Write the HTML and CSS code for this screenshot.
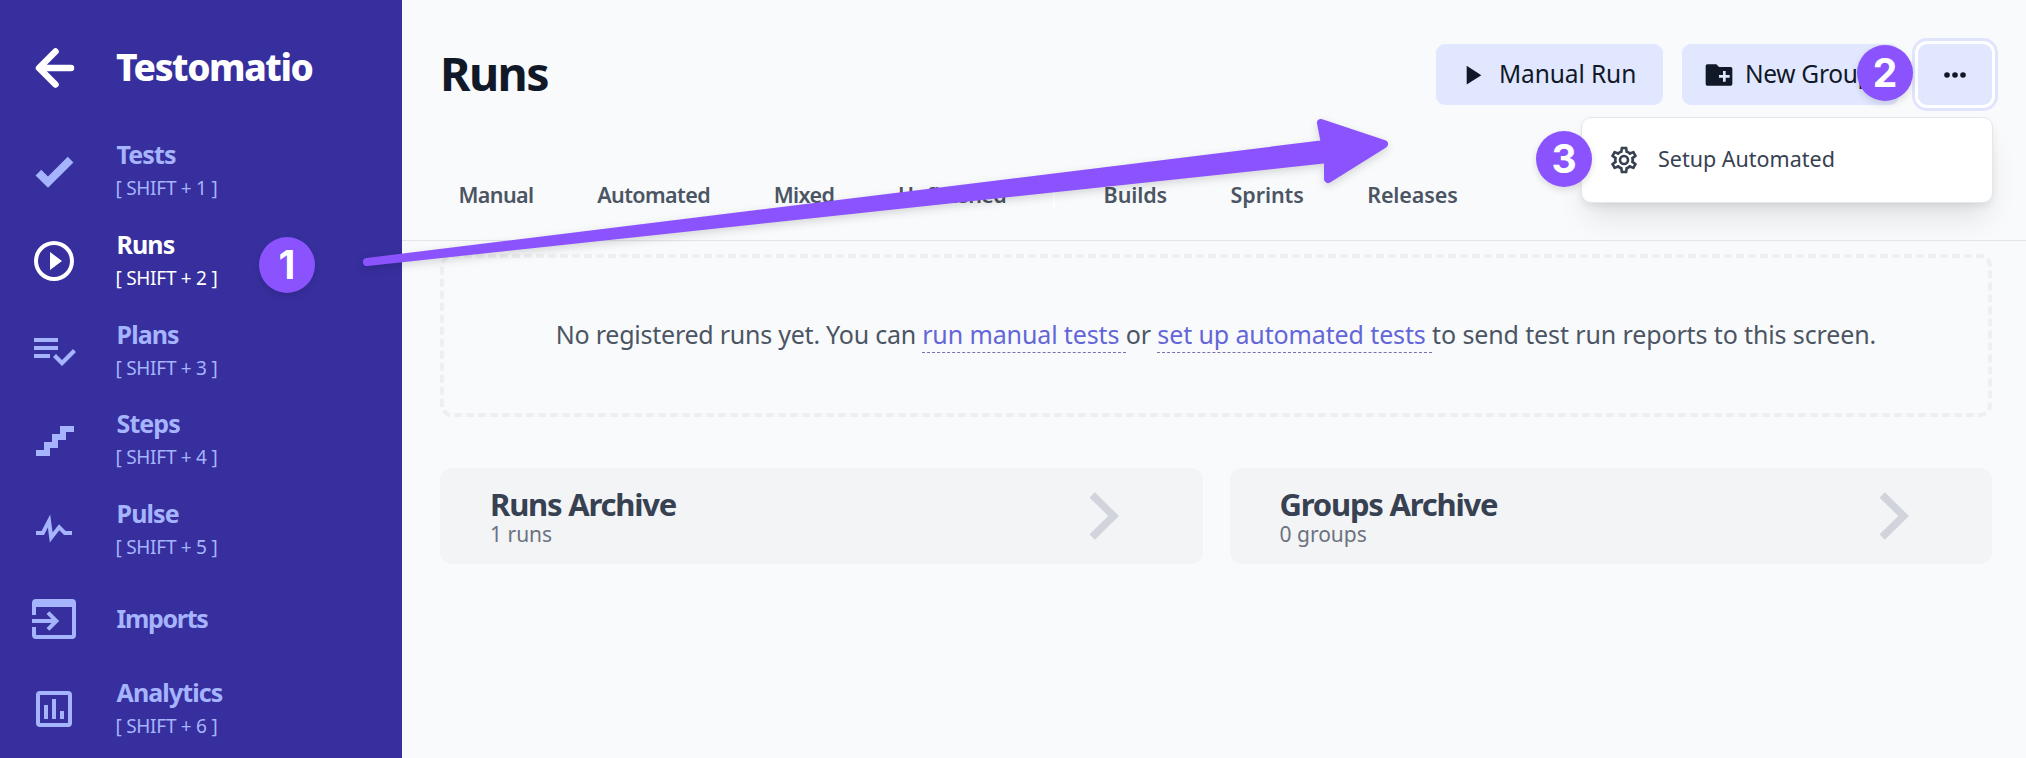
FILE: index.html
```html
<!DOCTYPE html>
<html lang="en">
<head>
<meta charset="utf-8">
<title>Runs - Testomatio</title>
<link rel="stylesheet" href="styles.css">
</head>
<body>
<div class="app">
  <aside class="sidebar">
    <div class="brand">
      <svg class="brand-back" viewBox="0 0 48 48"><path d="M25.5 7.5 9 24l16.5 16.5M9.500 24H41"/></svg>
      <span class="brand-name">Testomatio</span>
    </div>
    <nav class="nav">
      <a class="nav-item">
        <svg class="icon" viewBox="0 0 24 24"><path d="M9 20.420 2.790 14.210l2.830-2.830L9 14.770l9.880-9.890 2.830 2.830z"/></svg>
        <span class="nav-text"><b>Tests</b><small>[ SHIFT + 1 ]</small></span>
      </a>
      <a class="nav-item active">
        <svg class="icon" viewBox="0 0 24 24"><path d="M12 20a8 8 0 1 1 0-16 8 8 0 0 1 0 16m0-18a10 10 0 1 0 0 20 10 10 0 0 0 0-20m-2 14.500 6-4.500-6-4.500z"/></svg>
        <span class="nav-text"><b>Runs</b><small>[ SHIFT + 2 ]</small></span>
      </a>
      <a class="nav-item">
        <svg class="icon" viewBox="0 0 24 24"><path d="M14 10H2v2h12zM14 6H2v2h12zM2 16h8v-2H2zM21.500 11.500 23 13l-7 7-4.500-4.500L13 14l3 3z"/></svg>
        <span class="nav-text"><b>Plans</b><small>[ SHIFT + 3 ]</small></span>
      </a>
      <a class="nav-item">
        <svg class="icon" viewBox="0 0 24 24"><path d="M15 5v4h-4v4H7v4H3v3h7v-4h4v-4h4V8h4V5z"/></svg>
        <span class="nav-text"><b>Steps</b><small>[ SHIFT + 4 ]</small></span>
      </a>
      <a class="nav-item">
        <svg class="icon" viewBox="0 0 24 24"><path d="M3 13h2.790l4.310-8.210 1.180 8.960 3.220-4.090L17.830 13H21v2h-4l-2.330-2.330-4.750 6.060-.98-7.420L7 15H3z"/></svg>
        <span class="nav-text"><b>Pulse</b><small>[ SHIFT + 5 ]</small></span>
      </a>
      <a class="nav-item single">
        <svg class="icon" viewBox="0 0 24 24"><path d="M1 12h9.760l-2.500-2.500 1.410-1.420L14.590 13l-4.920 4.920-1.410-1.420 2.500-2.500H1zM21 2H3a2 2 0 0 0-2 2v6h2V6h18v14H3v-4H1v4a2 2 0 0 0 2 2h18a2 2 0 0 0 2-2V4a2 2 0 0 0-2-2"/></svg>
        <span class="nav-text"><b>Imports</b></span>
      </a>
      <a class="nav-item">
        <svg class="icon" viewBox="0 0 24 24"><path d="M19 3H5a2 2 0 0 0-2 2v14a2 2 0 0 0 2 2h14a2 2 0 0 0 2-2V5a2 2 0 0 0-2-2m0 16H5V5h14zM7 10h2v7H7zM11 7h2v10h-2zM15 13h2v4h-2z"/></svg>
        <span class="nav-text"><b>Analytics</b><small>[ SHIFT + 6 ]</small></span>
      </a>
    </nav>
  </aside>

  <main class="main">
    <header class="topbar">
      <h1>Runs</h1>
      <div class="actions">
        <button class="btn manual">
          <svg class="btn-icon" viewBox="0 0 24 24"><path d="M8 5.140v14l11-7z"/></svg><span>Manual Run</span>
        </button>
        <button class="btn group">
          <svg class="btn-icon" viewBox="0 0 24 24"><path fill-rule="evenodd" d="M20.800 6H12l-2-2H3.200A1.200 1.200 0 0 0 2 5.200v13.600A1.200 1.200 0 0 0 3.200 20h17.600a1.200 1.200 0 0 0 1.200-1.200V7.200A1.200 1.200 0 0 0 20.800 6M20 14h-3v3h-2v-3h-3v-2h3V9h2v3h3z"/></svg><span>New Group</span>
          <i class="badge badge-2">2</i>
        </button>
        <div class="more-wrap">
          <button class="btn more">
            <svg class="btn-icon" viewBox="0 0 32 32"><circle cx="8" cy="16" r="2.800"/><circle cx="16" cy="16" r="2.800"/><circle cx="24" cy="16" r="2.800"/></svg>
          </button>
          <div class="menu">
            <i class="badge badge-3">3</i>
            <svg class="menu-icon" viewBox="0 0 24 24"><path d="M12,8A4,4 0 0,1 16,12A4,4 0 0,1 12,16A4,4 0 0,1 8,12A4,4 0 0,1 12,8M12,10A2,2 0 0,0 10,12A2,2 0 0,0 12,14A2,2 0 0,0 14,12A2,2 0 0,0 12,10M10,22C9.750,22 9.540,21.820 9.500,21.580L9.130,18.930C8.500,18.680 7.960,18.340 7.440,17.940L4.950,18.950C4.730,19.030 4.460,18.950 4.340,18.730L2.340,15.270C2.210,15.050 2.270,14.780 2.460,14.630L4.570,12.970L4.500,12L4.570,11L2.460,9.370C2.270,9.220 2.210,8.950 2.340,8.730L4.340,5.270C4.460,5.050 4.730,4.960 4.950,5.050L7.440,6.050C7.960,5.660 8.500,5.320 9.130,5.070L9.500,2.420C9.540,2.180 9.750,2 10,2H14C14.250,2 14.460,2.180 14.500,2.420L14.870,5.070C15.500,5.320 16.040,5.660 16.560,6.050L19.050,5.050C19.270,4.960 19.540,5.050 19.660,5.270L21.660,8.730C21.790,8.950 21.730,9.220 21.540,9.370L19.430,11L19.500,12L19.430,13L21.540,14.630C21.730,14.780 21.790,15.050 21.660,15.270L19.660,18.730C19.540,18.950 19.270,19.040 19.050,18.950L16.560,17.950C16.040,18.340 15.500,18.680 14.870,18.930L14.500,21.580C14.460,21.820 14.250,22 14,22H10M11.250,4L10.880,6.610C9.680,6.860 8.620,7.500 7.850,8.390L5.440,7.350L4.690,8.650L6.800,10.200C6.400,11.370 6.400,12.640 6.800,13.800L4.680,15.360L5.430,16.660L7.860,15.620C8.630,16.500 9.680,17.140 10.870,17.380L11.240,20H12.760L13.130,17.390C14.320,17.140 15.370,16.500 16.140,15.620L18.570,16.660L19.320,15.360L17.200,13.810C17.600,12.640 17.600,11.370 17.200,10.200L19.310,8.650L18.560,7.350L16.150,8.390C15.380,7.500 14.320,6.860 13.120,6.620L12.750,4H11.250Z"/></svg>
            <span>Setup Automated</span>
          </div>
        </div>
      </div>
    </header>

    <div class="tabs">
      <div class="tab-group"><a>Manual</a><a>Automated</a><a>Mixed</a><a>Unfinished</a></div>
      <span class="tabs-sep"></span>
      <div class="tab-group wide"><a>Builds</a><a>Sprints</a><a>Releases</a></div>
    </div>

    <section class="content">
      <div class="empty"><p><span class="lead">No registered runs yet. You can </span><a>run manual tests&nbsp;</a>or <a>set up automated tests&nbsp;</a>to send test run reports to this screen.</p></div>
      <div class="archives">
        <div class="card">
          <div><h2>Runs Archive</h2><p>1 runs</p></div>
          <svg class="chevron" viewBox="0 0 30 48"><path d="M3.200 3 24.700 24 3.200 45"/></svg>
        </div>
        <div class="card">
          <div><h2>Groups Archive</h2><p>0 groups</p></div>
          <svg class="chevron" viewBox="0 0 30 48"><path d="M3.200 3 24.700 24 3.200 45"/></svg>
        </div>
      </div>
    </section>
  </main>

  <i class="badge badge-1">1</i>
  <svg class="pointer" viewBox="0 0 2026 758"><path d="M367 262 1325 144l-4-21 63 21-56 35v-20z"/></svg>
</div>
</body>
</html>
```
FILE: styles.css
```css
* { box-sizing: border-box; }
body {
  margin: 0;
  font-family: "Noto Sans", "Open Sans", sans-serif;
  background: #f9fafc;
  color: #4b5563;
}
h1, h2, p { margin: 0; }
svg { flex: none; display: block; }

.app { position: relative; display: flex; height: 758px; overflow: hidden; }

/* Sidebar */
.sidebar { width: 402px; flex: none; padding: 43px 0 0 30px; background: #372f9e; color: #a5b4fc; }
.brand { display: flex; align-items: center; gap: 38px; height: 48px; margin-bottom: 35.2px; color: #fff; }
.brand-back { width: 48px; height: 48px; position: relative; top: 1px; fill: none; stroke: #fff; stroke-width: 6.500; stroke-linecap: round; stroke-linejoin: round; }
.brand-name { font-size: 37px; font-weight: 800; line-height: 48px; letter-spacing: -1.4px; }
.nav-item { display: flex; align-items: center; gap: 37.5px; height: 89.6px; }
.nav-item.active { color: #fff; }
.icon { width: 48px; height: 48px; fill: currentColor; }
.nav-text { display: flex; flex-direction: column; padding-top: 1px; }
.nav-text b { font-size: 25px; font-weight: 700; line-height: 34px; letter-spacing: -.9px; padding-left: 1px; }
.nav-text small { font-size: 19px; line-height: 34px; letter-spacing: -.27px; }
.single .nav-text { padding: 0 0 2px; }
.single .nav-text b { letter-spacing: -1.3px; }

/* Header */
.main { flex: 1; }
.topbar { display: flex; justify-content: space-between; padding: 44px 34px 0 38px; height: 105px; }
h1 { font-size: 46.5px; font-weight: 700; line-height: 58px; letter-spacing: -1.6px; color: #111827; }
.actions { display: flex; gap: 19px; }
.btn {
  position: relative;
  display: flex; align-items: center; gap: 10px;
  height: 61px; padding: 0 20px; border: 0; border-radius: 9px;
  background: #e0e7ff; color: #111827;
  font: 24.5px/58px "Noto Sans", "Open Sans", sans-serif; letter-spacing: -.1px;
}
.btn > span { padding-bottom: 2px; white-space: nowrap; }
.manual { width: 227px; gap: 11px; }
.group { width: 217px; padding-left: 21px; letter-spacing: -.3px; }
.btn-icon { width: 32px; height: 32px; fill: #111827; }
.more-wrap { position: relative; }
.more { width: 74px; padding: 0 21px; box-shadow: 0 0 0 3px #fff, 0 0 0 6px #e0e4fd; }
.menu {
  position: absolute; top: 73px; right: -1px; width: 412px; height: 86px;
  display: flex; align-items: center; gap: 18px; padding-left: 26px;
  background: #fff; border: 1px solid #e6e7eb; border-radius: 10px;
  box-shadow: 0 20px 30px -6px rgba(0,0,0,.1), 0 4px 10px -2px rgba(0,0,0,.1);
  color: #374151; font-size: 21.5px;
}
.menu > span { padding-bottom: 4px; }
.menu-icon { width: 32px; height: 32px; fill: #374151; }

/* Tabs */
.tabs {
  display: flex; height: 136px; padding: 74px 0 0 56.5px;
  border-bottom: 1px solid #e4e5e9;
  font-size: 21.5px; font-weight: 650; line-height: 32px; letter-spacing: -.6px;
}
.tab-group { display: flex; gap: 63.7px; }
.tab-group.wide { gap: 63.5px; letter-spacing: -.1px; }
.tabs-sep { width: 2px; height: 28px; margin: 2px 48.5px 0 47px; background: #fff; }

/* Content */
.content { padding: 13px 34px 0 38px; }
.empty {
  display: flex; align-items: center; justify-content: center;
  height: 163px; padding-bottom: 4px;
  border: 4px dashed #eeeff1; border-radius: 12px;
  font-size: 25px; line-height: 38px; letter-spacing: -.12px; white-space: nowrap;
}
.empty .lead { letter-spacing: -.24px; }
.empty a { padding-bottom: 1px; color: #6366d8; border-bottom: 1px dashed #7672ab; }
.archives { display: grid; grid-template-columns: 1fr 1fr; gap: 27px; margin-top: 51px; }
.card {
  display: flex; align-items: center; justify-content: space-between;
  height: 96px; padding: 0 83.5px 0 50px; border-radius: 12px; background: #f3f4f6;
}
.card h2 { font-size: 31px; font-weight: 700; line-height: 34px; letter-spacing: -1.2px; color: #374151; }
.card p { font-size: 21px; line-height: 26px; color: #6b7280; }
.card > div { padding-top: 2px; }
.chevron { width: 30px; height: 48px; fill: none; stroke: #d1d5db; stroke-width: 7.500; }

/* Annotations */
.badge {
  position: absolute; width: 56px; height: 56px; border-radius: 50%;
  background: #8b53fe; color: #fff; text-align: center;
  font: 650 39px/55px Inter, sans-serif; letter-spacing: 0;
  box-shadow: 0 3px 7px rgba(0,0,0,.13);
}
.badge-1 { left: 259px; top: 237px; }
.badge-2 { left: 175px; top: 1px; z-index: 2; }
.badge-3 { left: -46px; top: 13px; }
.pointer {
  position: absolute; left: 0; top: 0; width: 2026px; height: 758px; pointer-events: none;
  fill: #8b53fe; filter: drop-shadow(0 3px 4px rgba(0,0,0,.15));
}
.pointer path { stroke: #8b53fe; stroke-width: 8; stroke-linejoin: round; }
```
